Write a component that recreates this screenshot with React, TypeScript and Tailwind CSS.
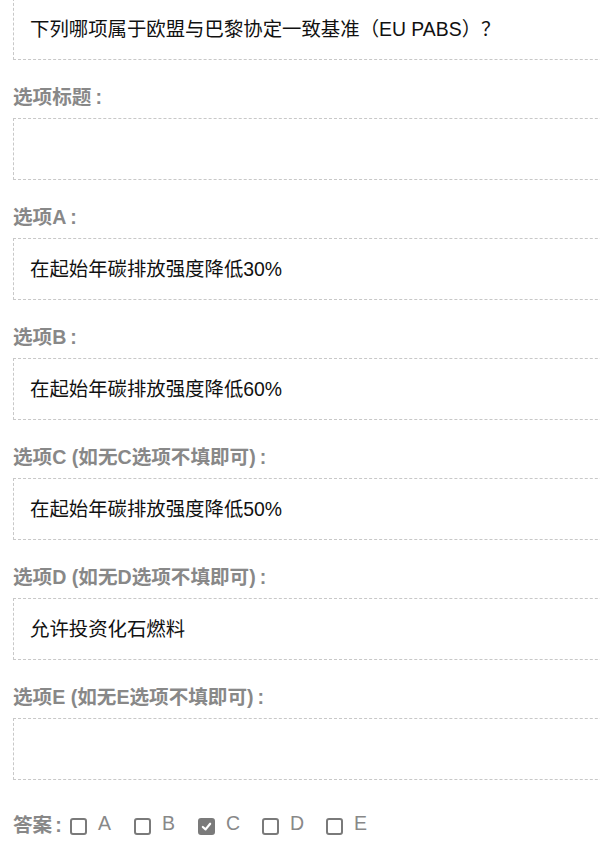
import React from "react";

const font = { fontFamily: '"Liberation Sans", "Noto Sans CJK SC", sans-serif' };

function Box({ text }: { text?: string }) {
  return (
    <div className="w-[640px] h-[62px] border border-dashed border-[#c8c8c8] pl-4 flex items-center text-[19.4px] text-[#111] leading-6">
      {text}
    </div>
  );
}

function Colon() {
  return <span className="inline-block w-[1em] pl-[4px]">:</span>;
}

function Label({ children }: { children: React.ReactNode }) {
  return (
    <div className="mt-[25px] mb-[9px] text-[19.6px] font-bold text-[#888] leading-6">
      {children}
      <Colon />
    </div>
  );
}

function Check({ checked, letter }: { checked?: boolean; letter: string }) {
  return (
    <div className="flex items-center w-[64px]">
      <span
        className={
          "w-[17px] h-[17px] rounded-[3px] border-2 border-[#7a7a7a] flex items-center justify-center mt-[2px] " +
          (checked ? "bg-[#7a7a7a]" : "bg-white")
        }
      >
        {checked && (
          <svg width="11" height="11" viewBox="0 0 12 12">
            <path d="M2 6.5 L5 9.2 L10 3" stroke="white" strokeWidth="2.4" fill="none" strokeLinecap="round" strokeLinejoin="round" />
          </svg>
        )}
      </span>
      <span className="ml-[11px] text-[19.5px] text-[#888] leading-6 -mt-[4px]">{letter}</span>
    </div>
  );
}

export default function App() {
  return (
    <div className="w-[600px] h-[867px] overflow-hidden bg-white" style={font}>
      <div className="pl-[13px] -mt-[2px]">
        <Box text="下列哪项属于欧盟与巴黎协定一致基准（EU PABS）？" />
        <Label>选项标题</Label>
        <Box />
        <Label>选项A</Label>
        <Box text="在起始年碳排放强度降低30%" />
        <Label>选项B</Label>
        <Box text="在起始年碳排放强度降低60%" />
        <Label>选项C (如无C选项不填即可)</Label>
        <Box text="在起始年碳排放强度降低50%" />
        <Label>选项D (如无D选项不填即可)</Label>
        <Box text="允许投资化石燃料" />
        <Label>选项E (如无E选项不填即可)</Label>
        <Box />
        <div className="mt-[33px] flex items-center">
          <span className="text-[19.6px] font-bold text-[#888] leading-6 w-[57px] flex">
            答案<span className="pl-[3px]">:</span>
          </span>
          <Check letter="A" />
          <Check letter="B" />
          <Check letter="C" checked />
          <Check letter="D" />
          <Check letter="E" />
        </div>
      </div>
    </div>
  );
}
